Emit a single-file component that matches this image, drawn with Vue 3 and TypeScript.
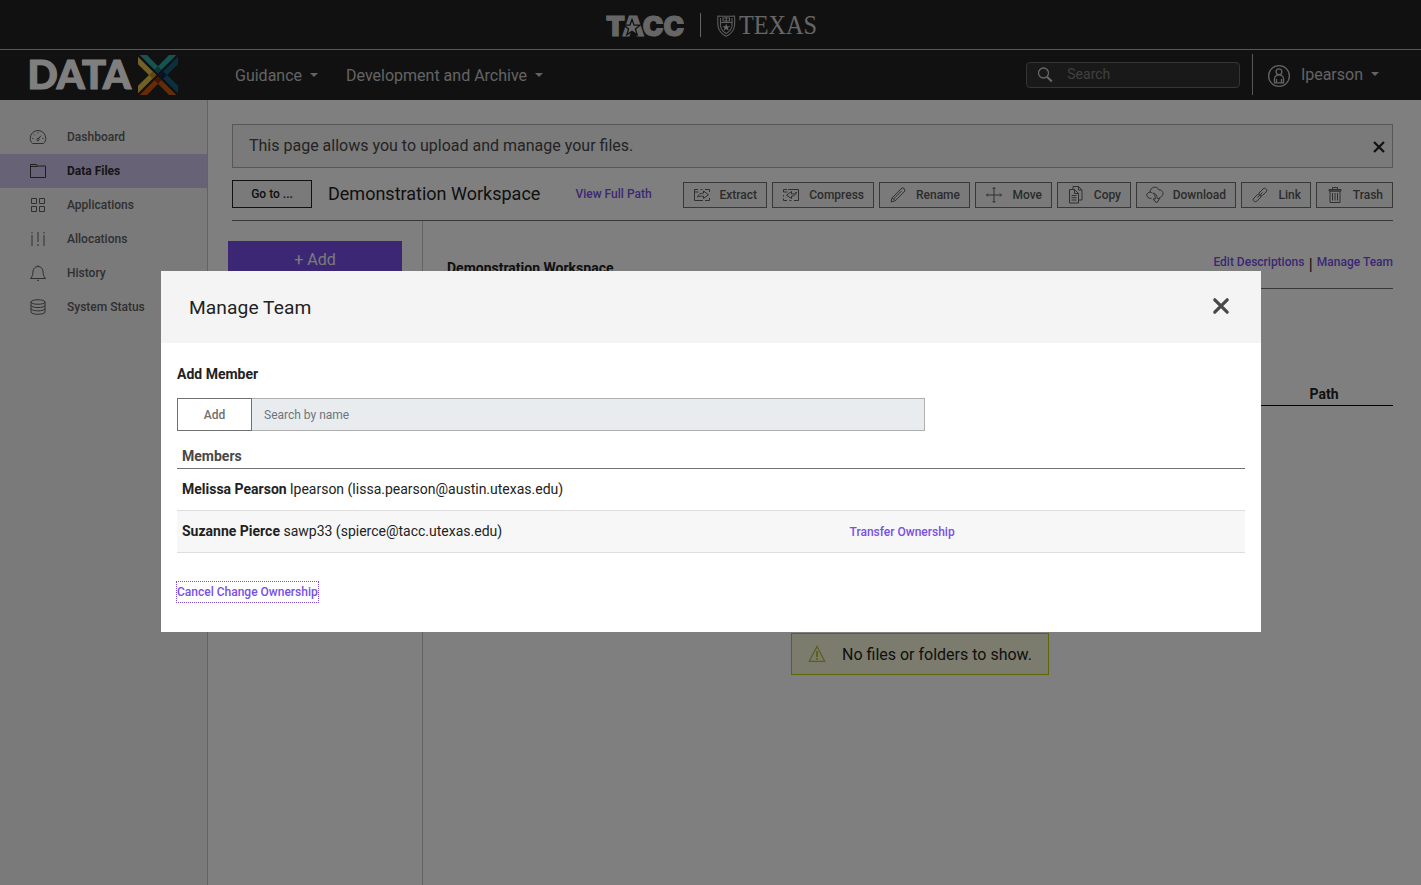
<script setup lang="ts">
interface NavItem { label: string; icon: string; active?: boolean }
interface ToolItem { label: string; icon: string; width: number }
interface Member { name: string; user: string; email: string; transferable: boolean }

const menus: string[] = ['Guidance', 'Development and Archive']

const navItems: NavItem[] = [
  { label: 'Dashboard', icon: 'M3.500 15.500h11c1.500-1.300 2.300-3.200 2.300-5.200a7.800 7.800 0 0 0-15.600 0c0 2 .8 3.900 2.300 5.200zM9 11.200l3-3.500M8.200 11a1 1 0 1 0 1.600 1a1 1 0 1 0-1.600-1M9 4.300v1.200M3.300 10.500h1.200M13.500 10.500h1.200M5 6.400l.9.9' },
  { label: 'Data Files', icon: 'M1.500 15.500v-13h6l1 1.500h8v11.500zM1.500 4.500h7', active: true },
  { label: 'Applications', icon: 'M2.500 2.500h5v5h-5zM10.500 2.500h5v5h-5zM2.500 10.500h5v5h-5zM10.500 10.500h5v5h-5z' },
  { label: 'Allocations', icon: 'M3 5v11M9 2v10M15 5v11M3 2v1.500M9 14v2M15 2v1.500' },
  { label: 'History', icon: 'M1.500 14.500h15c-2-2-2.200-4-2.400-6.500C13.800 4.500 12 2.500 9 2.500S4.200 4.500 3.900 8c-.2 2.500-.4 4.500-2.400 6.500zM8 16.300h2M9 1.300v1' },
  { label: 'System Status', icon: 'M2 4c0-3 14-3 14 0s-14 3-14 0v10c0 3 14 3 14 0v-10M2 7.300c0 3 14 3 14 0M2 10.600c0 3 14 3 14 0' },
]

const tools: ToolItem[] = [
  { label: 'Extract', width: 84, icon: 'M5 3.500H1.500v11H10M1.500 6h4M7.500 3.500h2M12 3.500h4.500V6M16.500 12v2.500H12M4.500 11c1-3 3-3.800 6-3.800V5l5 3.800-5 3.700v-2.300c-2.500-.2-4.500 0-6 .8z' },
  { label: 'Compress', width: 102, icon: 'M5 3.500H1.500V6h4M1.500 9v1.500M1.500 12.500v2H5M7.500 14.500h2M6 3.500h10.500v11H12M14.500 6c-1 1.500-2.500 2-5 2V5.500l-5 3.800 5 3.200v-2.300c2.500 0 4.500-1.500 5-4.200z' },
  { label: 'Rename', width: 91, icon: 'M2 16l1.200-4.300L13 1.900q2.500-.5 3 3L6.200 14.700zM3.200 11.700l3 3M12.500 5l-8 8' },
  { label: 'Move', width: 77, icon: 'M9 1.500v15M1.500 9h15M7.500 3L9 1.500 10.500 3M7.500 15L9 16.500l1.500-1.500M3 7.500L1.500 9 3 10.500M15 7.500L16.500 9 15 10.500' },
  { label: 'Copy', width: 74, icon: 'M6 3.500V.5h5.500l3.500 3.500v10h-3M11.500.5V4H15M2.500 3.500h5L11.500 7.500v9.500h-9zM7.500 3.500v4h4M4.500 9.500h5M4.500 11.700h5M4.500 14h5' },
  { label: 'Download', width: 100, icon: 'M5.500 12.500C-.5 12.500-.5 6.500 4 6.200 4 1 11-1 13 4c5-.5 5.500 6.500.5 7.500M4 6.200c1 0 1.800.3 2.500 1M7.500 7c2 .5 3.500 2.500 3.800 5.500h2.500L10.500 17 7 13h2.300c0-2.500-.6-4.500-1.800-6z' },
  { label: 'Link', width: 70, icon: 'M7.800 7.200l4.300-4.300c2.200-2 5 .8 3 3L11.500 9.500C10 10.800 8 10 7.700 8.200M10.200 10.800l-4.300 4.300c-2.200 2-5-.8-3-3l3.600-3.600C8 7.200 10 8 10.300 9.800M6.500 11.500l5-5' },
  { label: 'Trash', width: 77, icon: 'M4 5h10v11.500h-10zM3 3.500h12V5H3zM6.500 3.500v-2h5v2M6.500 7v7.500M9 7v7.500M11.500 7v7.500' },
]

const members: Member[] = [
  { name: 'Melissa Pearson', user: 'lpearson', email: 'lissa.pearson@austin.utexas.edu', transferable: false },
  { name: 'Suzanne Pierce', user: 'sawp33', email: 'spierce@tacc.utexas.edu', transferable: true },
]
</script>

<template>
  <div class="page">
    <header class="brandbar">
      <svg class="brands" width="212" height="36" viewBox="0 -5 212 36">
        <text class="tacc" x="1" y="22.800" textLength="78" lengthAdjust="spacingAndGlyphs">TACC</text>
        <path class="star" d="M27 6.500l2.100 5.700h6l-4.700 3.700 1.800 6-5.200-3.600-5.200 3.600 1.800-6-4.700-3.700h6z" />
        <path d="M95.500 0v24" stroke="#c8c8c8" />
        <g fill="none" stroke="#bbb" stroke-width="1.100">
          <path d="M113 3c5 .3 11.500.3 16.500 0 .3 2 .3 5 0 10-.6 4.500-3.500 8-8.300 10.200C116.500 21 113.600 17.500 113 13c-.3-5-.3-8 0-10z" />
          <path d="M115.500 5v8c.6 3.300 2.500 5.800 5.700 7.500 3.200-1.700 5.200-4.200 5.800-7.500V5" />
          <path d="M115 9.500h12.500M118 5h6.500v3H118zM121.200 4v5" />
        </g>
        <path d="M121.200 10.500l1 2.700h2.800l-2.200 1.700.9 2.800-2.500-1.700-2.500 1.700.9-2.800-2.200-1.700h2.800z" fill="#ccc" />
        <text class="texas" x="134" y="21.300" textLength="78" lengthAdjust="spacingAndGlyphs">TEXAS</text>
      </svg>
    </header>

    <header class="navbar">
      <svg class="datax" width="150" height="42" viewBox="0 0 150 42">
        <text class="data" x="-1.500" y="34.500" textLength="103.500" lengthAdjust="spacingAndGlyphs">DATA</text>
        <g transform="translate(109 1) scale(.3333)">
          <path fill="#2ca6a4" d="M5 0h22l33 34L93 0h22L60 55z" />
          <path fill="#e3c34c" d="M0 5l55 55L0 115V92l33-32L0 28z" />
          <path fill="#16607f" d="M120 5L65 60l55 55V92L87 60l33-32z" />
          <path fill="#c85a10" d="M5 120h22l33-34 33 34h22L60 65z" />
          <path fill="#17696d" d="M60 34l10.500 10.500L60 55 49.500 44.500z" />
          <path fill="#c98a20" d="M44 49.500L55 60 44 71 33.500 60z" />
          <path fill="#0b2452" d="M76 49.500L87 60 76 71 65 60z" />
          <path fill="#8e2413" d="M60 65l10.500 10.500L60 86 49.500 75.500z" />
        </g>
      </svg>
      <nav class="menus">
        <a v-for="m in menus" :key="m" class="menu">{{ m }}<i class="caret"></i></a>
      </nav>
      <div class="search">
        <svg width="16" height="16" viewBox="0 0 16 16" fill="none" stroke="#ccc">
          <circle cx="6.500" cy="6" r="5" stroke-width="1.300" />
          <path d="M10 9.800l4.800 4.700" stroke-width="2.200" />
        </svg>
        <span>Search</span>
      </div>
      <div class="account">
        <svg width="24" height="24" viewBox="0 0 24 24" fill="none" stroke="#c6c6c6" stroke-width="1.300">
          <circle cx="12" cy="12" r="10.400" />
          <circle cx="12" cy="7.800" r="2.900" />
          <path d="M7.500 18.800c-.8-5.800 1-8 4.500-8s5.300 2.200 4.500 8zM9.500 18.500V15M14.500 18.500V15" />
        </svg>
        <span>lpearson</span><i class="caret"></i>
      </div>
    </header>

    <div class="workspace">
      <aside class="sidebar">
        <a v-for="n in navItems" :key="n.label" class="nav-item" :class="{ active: n.active }">
          <svg width="18" height="18" viewBox="0 0 18 18"><path :d="n.icon" /></svg>
          <span>{{ n.label }}</span>
        </a>
      </aside>

      <main class="main">
        <div class="notice">
          <span>This page allows you to upload and manage your files.</span>
          <svg width="12" height="12" viewBox="0 0 12 12"><path d="M1 1l10 10M11 1L1 11" stroke="#222" stroke-width="2.200" /></svg>
        </div>

        <div class="toolbar">
          <button class="goto">Go to ...</button>
          <h1>Demonstration Workspace</h1>
          <a class="link">View Full Path</a>
          <div class="tools">
            <button v-for="t in tools" :key="t.label" class="tool" :style="{ width: t.width + 'px' }">
              <svg width="18" height="18" viewBox="0 0 18 18"><path :d="t.icon" /></svg>
              <span>{{ t.label }}</span>
            </button>
          </div>
        </div>

        <div class="content">
          <div class="rail"><button class="add">+ Add</button></div>
          <section class="files">
            <div class="files-head">
              <strong>Demonstration Workspace</strong>
              <div class="actions"><a class="link">Edit Descriptions</a><span class="bar">|</span><a class="link">Manage Team</a></div>
            </div>
            <div class="columns"><span>Path</span></div>
            <div class="empty">
              <svg width="18" height="18" viewBox="0 0 18 18" fill="none" stroke="#b5bf38" stroke-width="1.300">
                <path d="M9 1.500L16.700 16.300H1.300z" />
                <path d="M9 6v6M9 13v1.700" stroke-width="1.900" />
              </svg>
              <span>No files or folders to show.</span>
            </div>
          </section>
        </div>
      </main>
    </div>

    <div class="backdrop">
      <div class="modal">
        <div class="modal-head">
          <h2>Manage Team</h2>
          <svg width="18" height="18" viewBox="0 0 18 18"><path d="M2.800 2.800l12.400 12.400M15.200 2.800L2.800 15.200" stroke="#484848" stroke-width="3.200" stroke-linecap="round" /></svg>
        </div>
        <div class="modal-body">
          <h3>Add Member</h3>
          <div class="adder">
            <button>Add</button>
            <div class="field">Search by name</div>
          </div>
          <div class="table">
            <div class="thead">Members</div>
            <div v-for="m in members" :key="m.user" class="row">
              <div class="who"><b>{{ m.name }}</b> {{ m.user }} ({{ m.email }})</div>
              <a v-if="m.transferable" class="link">Transfer Ownership</a>
            </div>
          </div>
          <a class="link cancel">Cancel Change Ownership</a>
        </div>
      </div>
    </div>
  </div>
</template>

<style>
body { margin: 0; overflow: hidden; background: #fff; }
</style>

<style scoped>
* { box-sizing: border-box; }
.page { height: 885px; display: flex; flex-direction: column; font-family: Roboto, "Liberation Sans", sans-serif; color: #222; font-size: 14px; }
button { font-family: inherit; padding: 0; margin: 0; }
h1, h2, h3 { margin: 0; }
.brandbar { height: 50px; flex: none; background: #222; border-bottom: 1px solid #afafaf; display: flex; justify-content: center; padding-top: 8px; }
.brands { margin-left: 1px; overflow: visible; }
.tacc { font: 900 26.500px Inter, sans-serif; fill: #ccc; stroke: #ccc; stroke-width: 1.100; }
.star { fill: #ccc; stroke: #222; stroke-width: 1.300; }
.texas { font: 27px "Liberation Serif", serif; fill: #ccc; }
.navbar { height: 50px; flex: none; background: #222; display: flex; align-items: center; color: #c6c6c6; font-size: 16px; padding-right: 42px; }
.datax { margin-left: 29px; margin-top: -1px; flex: none; overflow: visible; }
.data { font: 900 40px Lato, sans-serif; fill: #fff; stroke: #fff; stroke-width: 1.200; }
.menus { display: flex; gap: 28px; margin-left: 56px; }
.menu { display: flex; align-items: center; }
.caret { border: 4px solid transparent; border-top-color: #c6c6c6; border-bottom: 0; margin-left: 8px; }
.search { width: 214px; height: 26px; margin-left: auto; border: 1px solid #6a6a6a; border-radius: 4px; background: #323232; display: flex; align-items: center; padding-left: 10px; gap: 14px; color: #808080; font-size: 14px; }
.search span { margin-top: -2px; }
.account { height: 41px; margin-left: 12px; margin-top: -2px; border-left: 1px solid #afafaf; display: flex; align-items: center; padding-left: 14px; }
.account span { margin-left: 10px; }
.account svg { margin-top: 4px; }
.workspace { flex: 1; display: flex; min-height: 0; }
.sidebar { width: 208px; flex: none; background: #f4f4f4; border-right: 1px solid #c6c6c6; padding-top: 20px; }
.nav-item { height: 34px; display: flex; align-items: center; padding-left: 29px; gap: 20px; font-size: 12px; font-weight: 500; color: #606060; }
.nav-item.active { background: #d0c5ec; color: #2c2c2c; font-weight: 700; }
.nav-item svg, .tool svg { fill: none; stroke: #606060; stroke-width: 1; flex: none; }
.nav-item.active svg { stroke: #3c3c3c; }
.main { flex: 1; padding: 24px 28px 0 24px; display: flex; flex-direction: column; min-width: 0; }
.notice { height: 44px; flex: none; border: 1px solid #afafaf; background: #f4f4f4; display: flex; align-items: center; justify-content: space-between; padding: 0 7px 0 16px; font-size: 16px; color: #484848; }
.notice span { margin-top: -2px; }
.notice svg { margin-top: 2px; }
.toolbar { height: 53px; flex: none; border-bottom: 1px solid #707070; display: flex; align-items: center; }
.goto { width: 80px; height: 28px; background: #f4f4f4; border: 1px solid #222; font-size: 12px; font-weight: 500; color: #222; }
.toolbar h1 { font-size: 18px; font-weight: 400; margin-left: 16px; margin-top: -2px; width: 247.500px; white-space: nowrap; }
.link { color: #784fe8; font-size: 12px; font-weight: 500; white-space: nowrap; }
.tools { margin-left: auto; display: flex; gap: 5px; padding-top: 2px; }
.tool { height: 26px; background: #f4f4f4; border: 1px solid #707070; display: flex; align-items: center; justify-content: space-between; padding: 0 9px; font-size: 12px; font-weight: 500; color: #585858; }
.content { flex: 1; display: flex; }
.rail { width: 191px; flex: none; border-right: 1px solid #c6c6c6; padding-top: 20px; }
.add { width: 174px; height: 36px; margin-left: -4px; background: #784fe8; border: 0; color: #f4f4f4; font-size: 16px; }
.files { flex: 1; margin-left: 24px; display: flex; flex-direction: column; min-width: 0; }
.files-head { height: 68px; border-bottom: 1px solid #707070; display: flex; justify-content: space-between; padding-top: 33px; }
.files-head strong { line-height: 28px; }
.actions { display: flex; line-height: 17px; }
.bar { width: 12.500px; text-align: center; font-size: 16px; line-height: 21px; }
.columns { height: 117px; border-bottom: 1px solid #000; display: flex; align-items: flex-end; justify-content: flex-end; font-weight: 700; padding-bottom: 3px; }
.columns span { width: 83.500px; }
.empty { width: 258px; height: 42px; margin: 227px auto 0; border: 1px solid #bccc11; background: #f8f8dc; display: flex; align-items: center; padding-left: 16px; gap: 16px; font-size: 16px; white-space: nowrap; }
.backdrop { position: fixed; inset: 0; background: rgba(0, 0, 0, .5); display: flex; justify-content: center; align-items: flex-start; padding: 271px 0 0 1px; }
.modal { width: 1100px; height: 361px; background: #fff; }
.modal-head { height: 72px; background: #f4f4f4; display: flex; justify-content: space-between; align-items: center; padding: 0 31px 0 28px; }
.modal-head h2 { font-size: 19.200px; font-weight: 400; letter-spacing: .08px; }
.modal-head svg { margin-top: -2px; }
.modal-body { padding: 23px 16px; }
.modal-body h3 { font-size: 14px; line-height: 16px; font-weight: 700; }
.adder { margin-top: 16px; width: 748px; height: 33px; display: flex; font-size: 12px; }
.adder button { width: 75px; background: #fff; border: 1px solid #707070; font-size: 12px; font-weight: 500; color: #707070; }
.field { flex: 1; background: #e9ecef; border: 1px solid #afafaf; border-left: 0; color: #6c757d; line-height: 32px; padding-left: 12px; }
.thead { height: 38px; padding: 17px 5px 0; line-height: 16px; border-bottom: 1px solid #707070; font-weight: 700; color: #484848; }
.row { height: 42px; border-bottom: 1px solid #dedede; display: grid; grid-template-columns: 667.500px 1fr; padding-left: 5px; align-items: center; }
.row:nth-child(odd) { background: #f7f7f7; }
.who { padding-bottom: 2px; }
.cancel { display: inline-block; margin-top: 29px; line-height: 20px; outline: 1px dotted #784fe8; }
</style>
